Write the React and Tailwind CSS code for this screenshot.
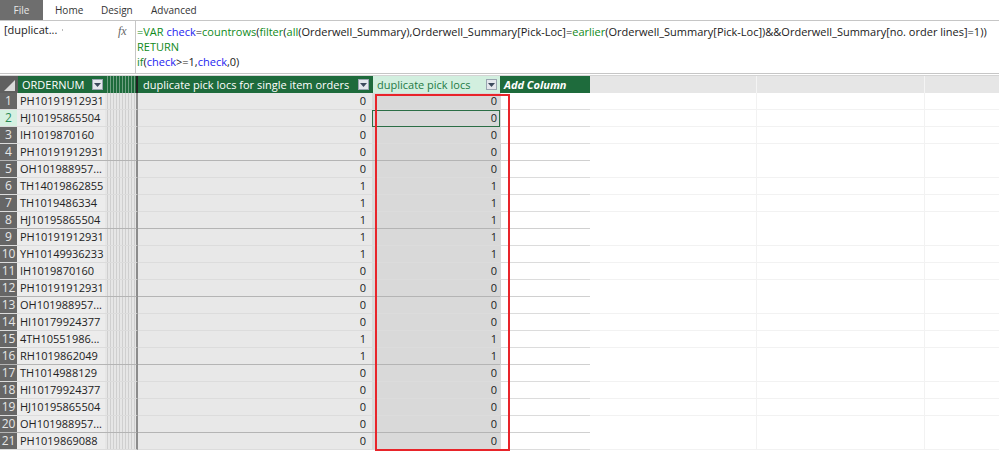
import React from "react";

const ROWS = [
  ["PH10191912931", 0, 0],
  ["HJ10195865504", 0, 0],
  ["IH1019870160", 0, 0],
  ["PH10191912931", 0, 0],
  ["OH101988957...", 0, 0],
  ["TH14019862855", 1, 1],
  ["TH1019486334", 1, 1],
  ["HJ10195865504", 1, 1],
  ["PH10191912931", 1, 1],
  ["YH10149936233", 1, 1],
  ["IH1019870160", 0, 0],
  ["PH10191912931", 0, 0],
  ["OH101988957...", 0, 0],
  ["HI10179924377", 0, 0],
  ["4TH10551986...", 1, 1],
  ["RH1019862049", 1, 1],
  ["TH1014988129", 0, 0],
  ["HI10179924377", 0, 0],
  ["HJ10195865504", 0, 0],
  ["OH101988957...", 0, 0],
  ["PH1019869088", 0, 0],
];

const COLS = "grid grid-cols-[17px_88px_33px_234px_128px_90px_167px_168px_1fr]";

function Dropdown() {
  return (
    <span className="flex h-[11px] w-[11px] shrink-0 items-center justify-center border border-[#9aa5b1] bg-[#e4e7ec]">
      <svg width="7" height="4" viewBox="0 0 7 4">
        <path d="M0 0h7L3.5 4z" fill="#3c4a5c" />
      </svg>
    </span>
  );
}

function G({ children }) {
  return <span className="text-[#0f8a1a]">{children}</span>;
}
function B({ children }) {
  return <span className="text-[#2323f0]">{children}</span>;
}

export default function App() {
  return (
    <div className="relative h-[451px] w-[999px] overflow-hidden bg-white font-['Open_Sans',sans-serif] text-[11px] text-[#222]">
      {/* ribbon tabs */}
      <div className="flex h-[20px] items-stretch text-[10px] text-[#333]">
        <div className="flex w-[43px] items-center justify-center bg-[#6e6e6e] text-[#e8e8e8]">File</div>
        <div className="flex w-[58px] items-center pl-[12px]">Home</div>
        <div className="flex w-[50px] items-center">Design</div>
        <div className="flex items-center">Advanced</div>
      </div>

      {/* formula bar */}
      <div className="flex h-[54px] border-y border-[#c6c6c6]">
        <div className="flex w-[136px] shrink-0 items-start border-r border-[#c6c6c6]">
          <div className="flex h-[18px] w-[118px] items-center pl-[4px] text-[#222]">
            <span className="w-[58px] whitespace-nowrap">[duplicat...</span>
            <span className="h-[2px] w-[1px] bg-[#bbb]" />
          </div>
          <span className="mt-[1px] font-['Liberation_Serif',serif] text-[12px] italic text-[#666]">fx</span>
        </div>
        <div className="min-w-0 pl-[1px] pt-[3px] leading-[15px] text-[#1a1a1a]">
          <div className="whitespace-nowrap">
            <G>=VAR</G> <B>check</B>=<G>countrows</G>(<G>filter</G>(<G>all</G>(Orderwell_Summary),Orderwell_Summary[Pick-Loc]=<G>earlier</G>(Orderwell_Summary[Pick-Loc])&amp;&amp;Orderwell_Summary[no. order lines]=1))
          </div>
          <div>
            <G>RETURN</G>
          </div>
          <div>
            <G>if</G>(<B>check</B>&gt;=1,<B>check</B>,0)
          </div>
        </div>
      </div>

      <div className="h-[2px] border-b border-[#d4d4d4]" />

      {/* grid header */}
      <div className={`${COLS} h-[17px] whitespace-nowrap leading-[17px]`}>
        <div className="relative bg-[#5f5f5f]">
          <svg className="absolute bottom-[2px] right-[2px]" width="11" height="11" viewBox="0 0 11 11">
            <path d="M11 0v11H0z" fill="#d9d9d9" />
          </svg>
        </div>
        <div className="flex items-center justify-between overflow-hidden border-l border-[#5f5f5f] bg-[#1e6b3c] pl-[4px] pr-[2px] text-white">
          <span>ORDERNUM</span>
          <Dropdown />
        </div>
        <div className="border-r-2 border-[#222] bg-[repeating-linear-gradient(90deg,#1e6b3c_0px,#1e6b3c_2px,#6f9f82_2px,#6f9f82_3px)]" />
        <div className="flex items-center justify-between overflow-hidden bg-[#1e6b3c] pl-[5px] pr-[3px] text-white">
          <span>duplicate pick locs for single item orders</span>
          <Dropdown />
        </div>
        <div className="flex items-center justify-between overflow-hidden border-l border-[#1e6b3c] bg-[#d2efdf] pl-[4px] pr-[3px] text-[#1e7a45]">
          <span>duplicate pick locs</span>
          <Dropdown />
        </div>
        <div className="flex items-center overflow-hidden bg-[#1e6b3c] pl-[4px] font-bold italic text-white">Add Column</div>
        <div className="border-r border-[#f4f4f4] bg-[#e6e6e6]" />
        <div className="border-r border-[#f4f4f4] bg-[#e6e6e6]" />
        <div className="bg-[#e6e6e6]" />
      </div>

      {/* data rows */}
      {ROWS.map(([order, a, b], i) => {
        const n = i + 1;
        const band = n % 4 === 0;
        const line = band ? "border-b-2 border-[#b4b4b4]" : "border-b border-[#dcdcdc]";
        const selected = n === 2;
        return (
          <div key={n} className={`${COLS} h-[17px] whitespace-nowrap leading-[16px]`}>
            <div
              className={`flex items-center justify-center text-[12px] ${line} ${
                selected ? "bg-[#d5f0e1] text-[#2a8a55]" : "bg-[#666666] text-[#e6e6e6]"
              } ${band ? "border-[#8a8a8a]" : "border-[#7a7a7a]"}`}
            >
              {n}
            </div>
            <div className={`overflow-hidden bg-[#ececec] pl-[3px] ${line}`}>{order}</div>
            <div
              className={`border-r-2 border-r-[#8c8c8c] bg-[repeating-linear-gradient(90deg,#e6e6e6_0px,#e6e6e6_2px,#cfcfcf_2px,#cfcfcf_3px)] ${line}`}
            />
            <div className={`bg-[#e8e8e8] pr-[6px] text-right ${line}`}>{a}</div>
            <div
              className={`bg-[#d9d9d9] pr-[3px] text-right ${line} ${
                selected ? "outline outline-1 -outline-offset-1 outline-[#2b6e45]" : ""
              }`}
            >
              {b}
            </div>
            <div className={`border-l border-[#d0d0d0] bg-white ${line}`} />
            <div className="border-b border-r border-[#f2f2f2] bg-white" />
            <div className="border-b border-r border-[#f2f2f2] bg-white" />
            <div className="border-b border-[#f2f2f2] bg-white" />
          </div>
        );
      })}

      {/* red highlight box */}
      <div className="absolute left-[375px] top-[94px] h-[357px] w-[135px] border-2 border-[#e8242a]" />
    </div>
  );
}
